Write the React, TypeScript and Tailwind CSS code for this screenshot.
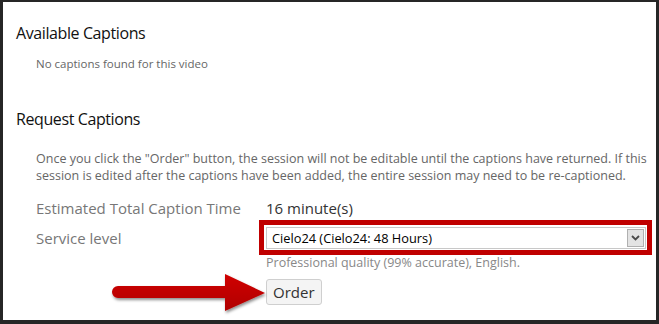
import React from "react";

const font = { fontFamily: '"Open Sans", "Noto Sans", sans-serif' };

function Arrow() {
  return (
    <svg
      className="absolute left-[104px] top-[268px]"
      width="164"
      height="52"
      viewBox="0 0 164 52"
    >
      <defs>
        <filter id="sh" x="-10%" y="-20%" width="130%" height="160%">
          <feDropShadow dx="1" dy="2" stdDeviation="1.5" floodColor="#000" floodOpacity="0.45" />
        </filter>
        <linearGradient id="g" x1="0" y1="0" x2="0" y2="1">
          <stop offset="0" stopColor="#d00000" />
          <stop offset="1" stopColor="#b00000" />
        </linearGradient>
      </defs>
      <g filter="url(#sh)">
        <path
          d="M11 16 L118 16 L118 4 L158 23 L118 41 L118 28 L11 28 A6 6 0 0 1 11 16 Z"
          fill="url(#g)"
        />
      </g>
    </svg>
  );
}

export default function App() {
  return (
    <div
      className="relative w-[659px] h-[324px] bg-white border-t-2 border-l-[3px] border-r-[3px] border-b-4 border-[#262626] overflow-hidden"
      style={font}
    >
      <div className="pl-[13px] pt-[19px]">
        <h2 className="text-[16px] leading-[24px] tracking-[-0.4px] text-[#111]">Available Captions</h2>
        <div className="pl-[20px] pt-[11px] text-[11.5px] leading-[16px] text-[#666]">
          No captions found for this video
        </div>
        <h2 className="pt-[35px] text-[16px] leading-[24px] tracking-[-0.4px] text-[#111]">Request Captions</h2>
        <p className="pl-[20px] pt-[19px] text-[12.5px] leading-[17px] text-[#666] whitespace-nowrap">
          Once you click the "Order" button, the session will not be editable until the captions have returned. If this
          <br />
          session is edited after the captions have been added, the entire session may need to be re-captioned.
        </p>
        <div className="pl-[20px] pt-[14px] grid grid-cols-[230px_1fr] text-[15px]">
          <div className="leading-[20px] text-[#777]">Estimated Total Caption Time</div>
          <div className="leading-[20px] text-[#333]">16 minute(s)</div>
          <div className="leading-[20px] text-[#777] pt-[10px]">Service level</div>
          <div className="pt-[2px]">
            <div className="-ml-[7px] w-[393px] border-[5px] border-[#c00000] pl-[2px] pt-[2px] pr-[1px] pb-[1px]">
              <div className="h-[22px] border border-[#c8c8c8] bg-white flex items-center justify-between pl-[5px] pr-[1px]">
                <span className="text-[12.8px] text-black leading-none">Cielo24 (Cielo24: 48 Hours)</span>
                <span className="w-[17px] h-[18px] bg-[#e3e3e3] border border-[#b0b0b0] flex items-center justify-center">
                  <svg width="9" height="6" viewBox="0 0 9 6">
                    <path d="M1 1 L4.5 4.5 L8 1" stroke="#4a4a4a" strokeWidth="1.8" fill="none" />
                  </svg>
                </span>
              </div>
            </div>
            <div className="text-[12.5px] leading-[16px] text-[#888]">
              Professional quality (99% accurate), English.
            </div>
            <button className="mt-[8px] h-[26px] px-[6px] text-[15px] leading-none text-[#333] bg-[#f4f4f4] border border-[#cfcfcf] rounded-[3px]" style={font}>
              Order
            </button>
          </div>
        </div>
      </div>
      <Arrow />
    </div>
  );
}
